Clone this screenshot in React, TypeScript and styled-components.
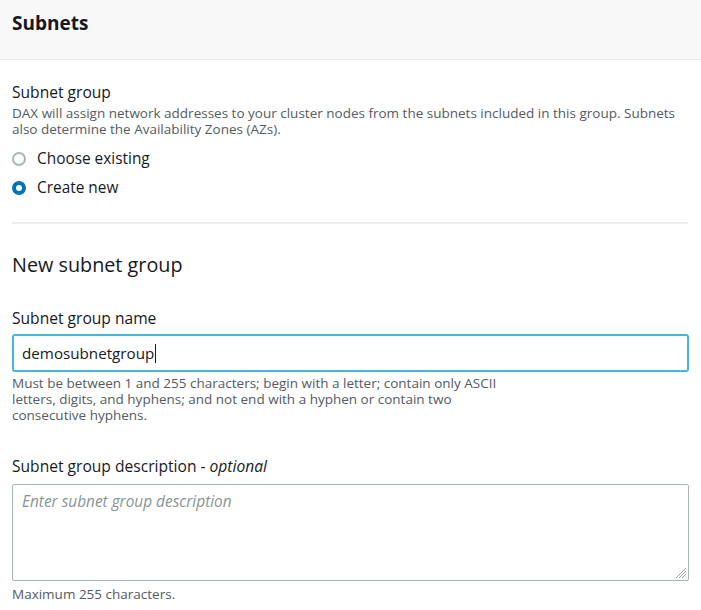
import React from 'react';
import styled, { createGlobalStyle } from 'styled-components';

const GlobalStyle = createGlobalStyle`
  html, body {
    margin: 0;
    padding: 0;
    background: #ffffff;
  }
  body {
    font-family: "Open Sans", "Noto Sans", Arial, sans-serif;
    color: #16191f;
  }
`;

const Panel = styled.section`
  width: 701px;
  background: #ffffff;
`;

const Header = styled.header`
  height: 60px;
  background: #f8f8f8;
  border-bottom: 1px solid #eaeded;
  padding: 10px 12px 0;
  box-sizing: border-box;
`;

const Title = styled.h2`
  margin: 0;
  font-size: 19px;
  line-height: 26px;
  font-weight: 700;
  color: #16191f;
`;

const Body = styled.div`
  padding: 21px 12px 20px;
`;

const Field = styled.div<{ $gap?: number }>`
  margin-top: ${({ $gap }) => $gap ?? 0}px;
`;

const Label = styled.label`
  display: block;
  font-size: 15.6px;
  line-height: 22px;
  color: #16191f;

  em {
    font-style: italic;
  }
`;

const Description = styled.p<{ $width?: number }>`
  margin: 2px 0 0;
  max-width: ${({ $width }) => ($width ? `${$width}px` : 'none')};
  font-size: 13.5px;
  line-height: 16px;
  color: #545b64;
`;

const Hint = styled(Description)<{ $gap?: number }>`
  margin-top: ${({ $gap }) => $gap ?? 3}px;
`;

const RadioList = styled.div`
  display: flex;
  flex-direction: column;
  gap: 7px;
  margin-top: 11px;
`;

const RadioRow = styled.label`
  display: flex;
  align-items: center;
  gap: 11px;
  font-size: 15.4px;
  line-height: 22px;
  color: #16191f;
`;

const RadioDot = styled.span<{ $checked?: boolean }>`
  width: 14px;
  height: 14px;
  border-radius: 50%;
  box-sizing: border-box;
  border: ${({ $checked }) => ($checked ? '4px solid #0073bb' : '2px solid #aab7b8')};
  background: #ffffff;
  flex-shrink: 0;
`;

const Divider = styled.hr`
  margin: 23px 0 0;
  border: 0;
  border-top: 2px solid #eaeded;
  width: 676px;
`;

const SectionTitle = styled.h3`
  margin: 27px 0 0;
  font-size: 19.8px;
  line-height: 28px;
  font-weight: 400;
  color: #16191f;
`;

const TextInput = styled.div`
  margin-top: 5px;
  height: 38px;
  box-sizing: border-box;
  border: 2px solid #44b9d6;
  border-radius: 3px;
  padding: 0 8px;
  display: flex;
  align-items: center;
  font-size: 15.2px;
  color: #16191f;
`;

const Caret = styled.span`
  display: inline-block;
  width: 1px;
  height: 19px;
  background: #16191f;
  margin-left: 1px;
`;

const TextArea = styled.div`
  position: relative;
  margin-top: 7px;
  height: 97px;
  box-sizing: border-box;
  border: 1px solid #aab7b8;
  border-radius: 2px;
  padding: 6px 9px 5px;
  font-size: 15.4px;
  line-height: 22px;
`;

const Placeholder = styled.span`
  color: #879596;
  font-style: italic;
`;

const Grip = styled.svg`
  position: absolute;
  right: 2px;
  bottom: 2px;
`;

const App: React.FC = () => (
  <>
    <GlobalStyle />
    <Panel>
      <Header>
        <Title>Subnets</Title>
      </Header>
      <Body>
        <Field>
          <Label>Subnet group</Label>
          <Description>
            DAX will assign network addresses to your cluster nodes from the subnets included in this group. Subnets
            also determine the Availability Zones (AZs).
          </Description>
          <RadioList>
            <RadioRow>
              <RadioDot />
              Choose existing
            </RadioRow>
            <RadioRow>
              <RadioDot $checked />
              Create new
            </RadioRow>
          </RadioList>
        </Field>

        <Divider />

        <SectionTitle>New subnet group</SectionTitle>

        <Field $gap={28}>
          <Label>Subnet group name</Label>
          <TextInput>
            demosubnetgroup
            <Caret />
          </TextInput>
          <Hint $width={495}>
            Must be between 1 and 255 characters; begin with a letter; contain only ASCII letters, digits, and hyphens;
            and not end with a hyphen or contain two consecutive hyphens.
          </Hint>
        </Field>

        <Field $gap={32}>
          <Label>
            Subnet group description - <em>optional</em>
          </Label>
          <TextArea>
            <Placeholder>Enter subnet group description</Placeholder>
            <Grip width="10" height="10" viewBox="0 0 10 10">
              <path d="M10 0 L0 10 M10 3 L3 10 M10 6 L6 10" stroke="#9aa3a4" strokeWidth="1" />
            </Grip>
          </TextArea>
          <Hint $gap={5}>Maximum 255 characters.</Hint>
        </Field>
      </Body>
    </Panel>
  </>
);

export default App;
